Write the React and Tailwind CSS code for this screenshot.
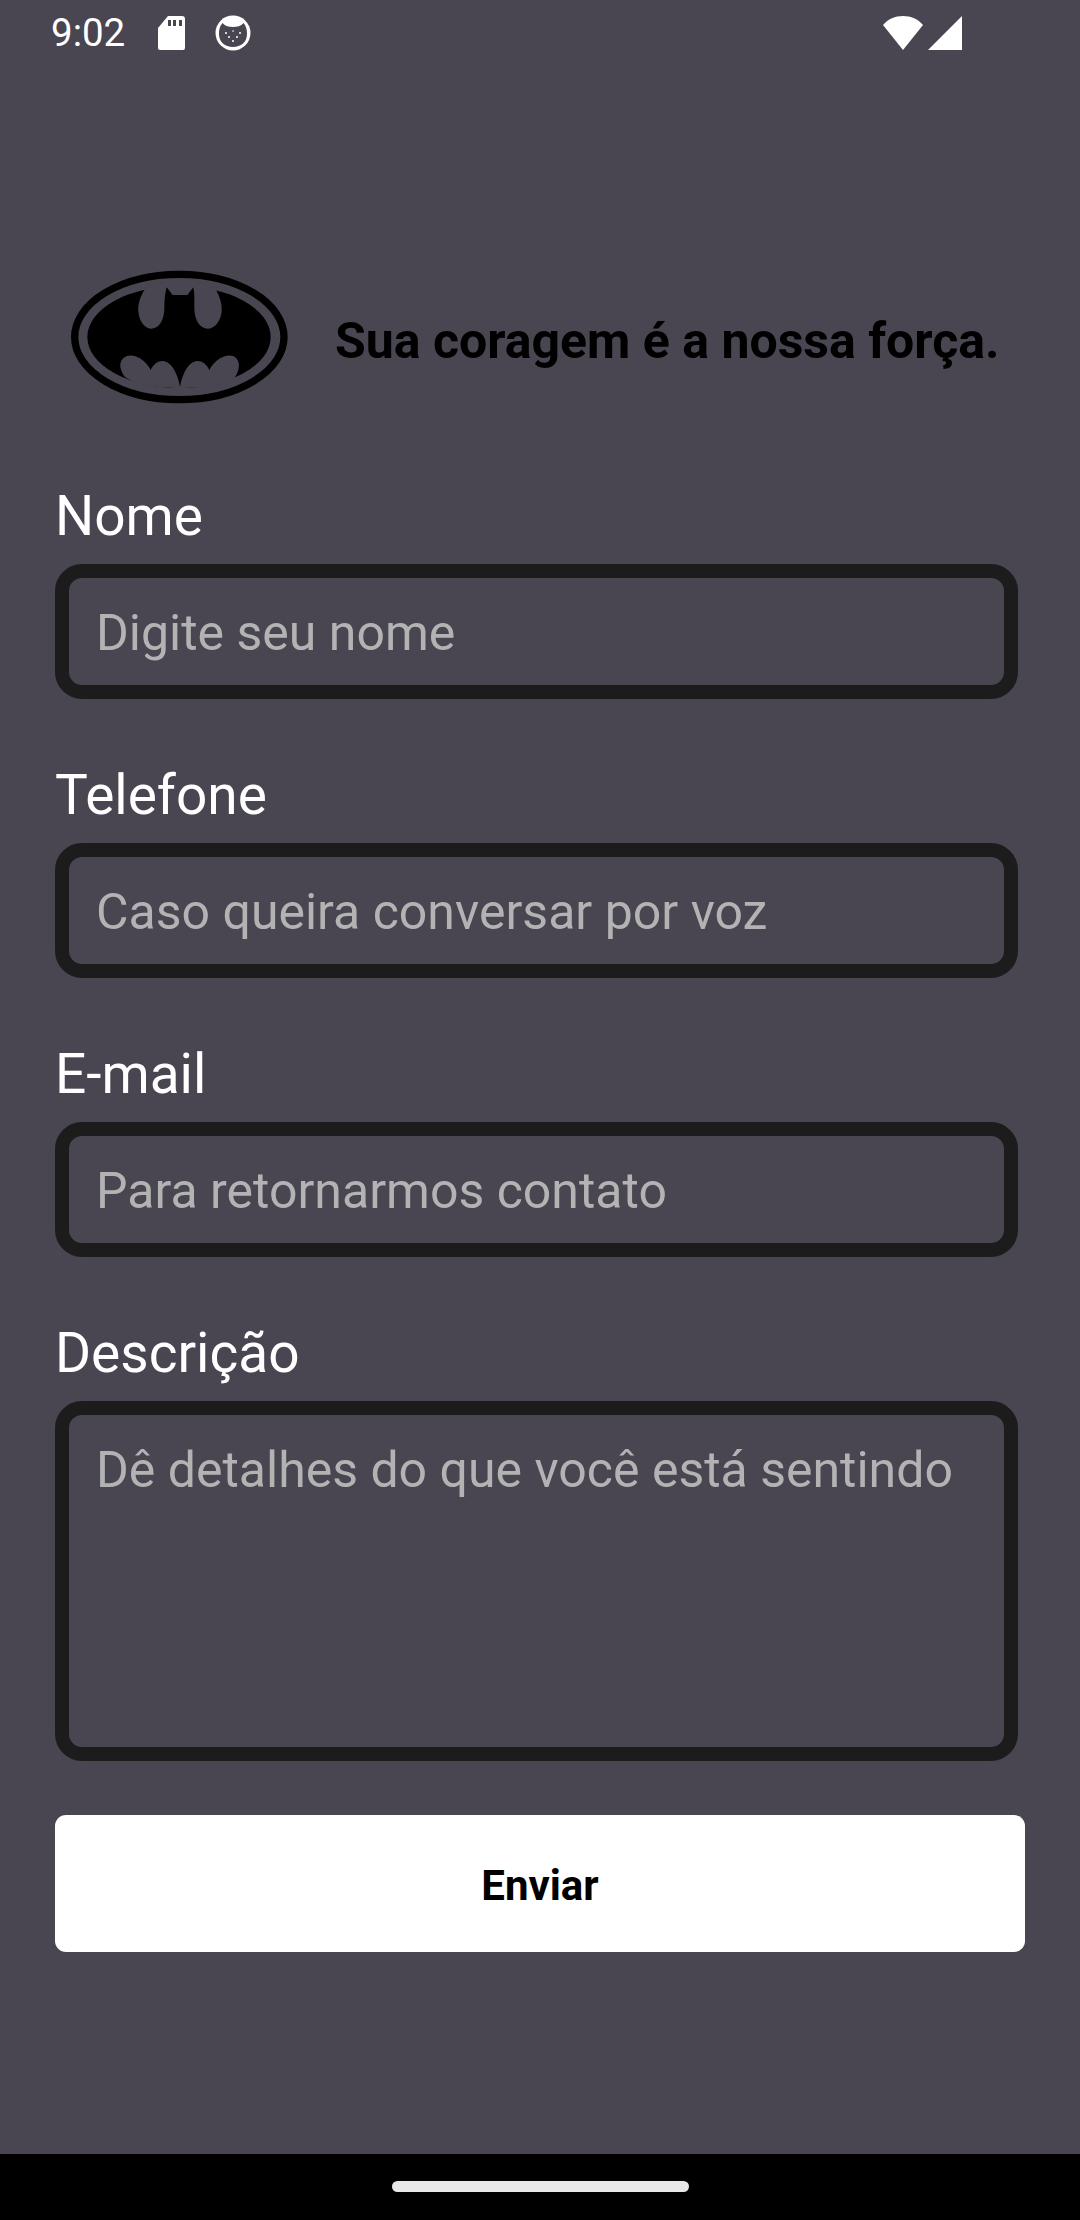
import React from 'react';

const roboto = "font-['Roboto',sans-serif]";

function SdIcon() {
  return (
    <svg width="28" height="36" viewBox="0 0 28 36" className="ml-[32px]">
      <path fill="#fff" fillRule="evenodd" d="M11 1h14a3 3 0 0 1 3 3v29a2 2 0 0 1-2 2H3a2 2 0 0 1-2-2V13zM11 5v6h3V5zM16 5v6h3V5zM22 5v6h3V5z" />
    </svg>
  );
}

function CatIcon() {
  return (
    <svg width="36" height="36" viewBox="0 0 36 36" className="ml-[30px]">
      <circle cx="18" cy="18" r="17.5" fill="#fff" />
      <path fill="#494551" d="M4 19C4 14 5 11 7.5 8C10 11 14 12 18 12C22 12 26 11 28.5 8C31 11 32 14 32 19C32 27 26 32 18 32C10 32 4 27 4 19Z" />
      <g fill="#fff">
        <circle cx="11" cy="18" r="1" />
        <circle cx="25" cy="18" r="1" />
        <circle cx="18" cy="16" r="0.8" />
        <circle cx="14" cy="22" r="1" />
        <circle cx="22" cy="22" r="1" />
        <circle cx="18" cy="26" r="1" />
      </g>
    </svg>
  );
}

function StatusBar() {
  return (
    <div className={`flex h-[66px] items-center pl-[51px] pr-[118px] text-[38.5px] text-white ${roboto}`}>
      <span className="leading-none">9:02</span>
      <SdIcon />
      <CatIcon />
      <div className="ml-auto flex items-center gap-[4px]">
        <svg width="42" height="36" viewBox="0 0 42 36">
          <path fill="#fff" d="M1 10C6 4 13 1 21 1s15 3 20 9L21 35z" />
        </svg>
        <svg width="34" height="36" viewBox="0 0 34 36">
          <path fill="#fff" d="M34 1v34H0z" />
        </svg>
      </div>
    </div>
  );
}

function BatLogo() {
  return (
    <svg width="260" height="170" viewBox="0 0 780 510" className="shrink-0">
      <ellipse cx="388" cy="261" rx="314" ry="188" fill="none" stroke="#000" strokeWidth="22" />
      <ellipse cx="387" cy="261" rx="275" ry="153" fill="#000" />
      <path
        fill="#494551"
        d="M292 108C270 135 263 165 265 185C268 215 285 236 305 236C330 236 343 205 343 175C343 150 345 130 350 112L368 135H412L430 112C434 130 433 150 433 175C433 205 447 236 472 236C495 236 512 212 515 185C517 160 508 132 490 108C440 88 340 88 292 108Z"
      />
      <path
        fill="#494551"
        d="M226 382C212 365 207 345 214 332C224 313 250 312 270 325C284 334 295 346 302 360C310 342 325 332 340 333C362 335 382 365 390 410C398 365 418 335 440 333C455 332 470 342 478 360C485 346 496 334 510 325C530 312 556 313 564 332C570 345 566 365 555 382C500 425 280 425 226 382Z"
      />
    </svg>
  );
}

function Field({ label, placeholder, tall }) {
  return (
    <div className="flex flex-col">
      <label className="h-[80px] text-[55px] leading-[64px] text-white">{label}</label>
      <div
        className={`rounded-[27px] border-[14px] border-[#1c1c1c] px-[27px] text-[50px] leading-[58px] text-[#b3b3b3] ${
          tall ? 'h-[360px] pt-[26px]' : 'flex h-[135px] items-center pt-[2px]'
        }`}
      >
        {placeholder}
      </div>
    </div>
  );
}

export default function App() {
  return (
    <div className={`flex h-[2220px] w-[1080px] flex-col bg-[#494551] ${roboto}`}>
      <StatusBar />
      <div className="flex grow flex-col px-[55px]">
        <div className="mt-[184px] -ml-[5px] flex h-[170px] items-center">
          <BatLogo />
          <h1 className="mt-[12px] ml-[25px] text-[50px] font-bold whitespace-nowrap text-black">Sua coragem é a nossa força.</h1>
        </div>
        <div className="mt-[64px] flex w-[963px] flex-col gap-[64px]">
          <Field label="Nome" placeholder="Digite seu nome" />
          <Field label="Telefone" placeholder="Caso queira conversar por voz" />
          <Field label="E-mail" placeholder="Para retornarmos contato" />
          <Field label="Descrição" placeholder="Dê detalhes do que você está sentindo" tall />
        </div>
        <button
          type="button"
          className="mt-[54px] h-[137px] w-[970px] rounded-[11px] bg-white pt-[3px] text-[42px] font-bold text-black"
        >
          Enviar
        </button>
      </div>
      <div className="flex h-[66px] justify-center bg-black pt-[27px]">
        <div className="h-[11px] w-[297px] rounded-full bg-[#e8e8e8]" />
      </div>
    </div>
  );
}
